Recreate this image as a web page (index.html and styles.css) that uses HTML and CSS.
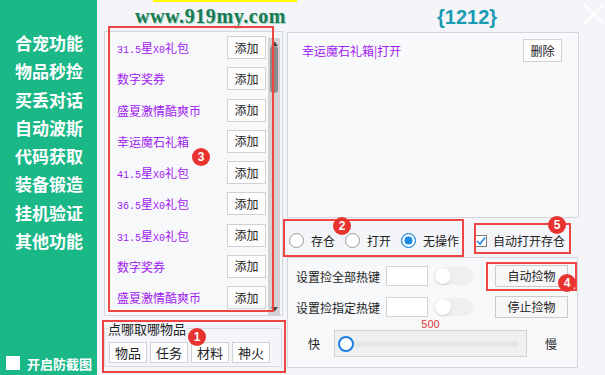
FILE: index.html
```html
<!DOCTYPE html>
<html lang="zh-CN">
<head>
    <meta charset="UTF-8">
    <title>物品秒捡</title>
    <link rel="stylesheet" href="styles.css">
</head>
<body>

<div class="app">
    <aside class="sidebar">
        <nav class="menu">
            <a>合宠功能</a>
            <a>物品秒捡</a>
            <a>买丢对话</a>
            <a>自动波斯</a>
            <a>代码获取</a>
            <a>装备锻造</a>
            <a>挂机验证</a>
            <a>其他功能</a>
        </nav>
        <label class="guard"><span class="box"></span>开启防截图</label>
    </aside>

    <main class="main">
        <div class="head-left">
            <div class="strip"></div>
            <div class="site">www.919my.com</div>
        </div>
        <div class="head-right"><span class="code">{1212}</span></div>
        <div class="head-close">
            <svg width="22" height="22" viewBox="0 0 22 22"><path d="M1 1 L21 21 M21 1 L1 21" stroke="#fff" stroke-width="2"/></svg>
        </div>

        <section class="left">
            <div class="list-panel">
                <ul class="items">
                    <li><span class="name"><span class="num">31.5</span>星<span class="num">X0</span>礼包</span><button class="btn">添加</button></li>
                    <li><span class="name">数字奖券</span><button class="btn">添加</button></li>
                    <li><span class="name">盛夏激情酷爽币</span><button class="btn">添加</button></li>
                    <li><span class="name">幸运魔石礼箱</span><button class="btn">添加</button></li>
                    <li><span class="name"><span class="num">41.5</span>星<span class="num">X0</span>礼包</span><button class="btn">添加</button></li>
                    <li><span class="name"><span class="num">36.5</span>星<span class="num">X0</span>礼包</span><button class="btn">添加</button></li>
                    <li><span class="name"><span class="num">31.5</span>星<span class="num">X0</span>礼包</span><button class="btn">添加</button></li>
                    <li><span class="name">数字奖券</span><button class="btn">添加</button></li>
                    <li><span class="name">盛夏激情酷爽币</span><button class="btn">添加</button></li>
                </ul>
                <div class="scrollbar">
                    <span class="arrow up"></span>
                    <span class="thumb"></span>
                    <span class="fill"></span>
                    <span class="arrow down"></span>
                </div>
            </div>
            <fieldset class="pick">
                <legend>点哪取哪物品</legend>
                <div class="pick-btns">
                    <button class="btn">物品</button>
                    <button class="btn">任务</button>
                    <button class="btn">材料</button>
                    <button class="btn">神火</button>
                </div>
            </fieldset>
        </section>

        <section class="right">
            <div class="detail">
                <div class="detail-row">
                    <span class="name">幸运魔石礼箱|打开</span>
                    <button class="btn">删除</button>
                </div>
            </div>

            <div class="options">
                <label class="radio"><span class="dot"></span>存仓</label>
                <label class="radio"><span class="dot"></span>打开</label>
                <label class="radio"><span class="dot on"></span>无操作</label>
                <label class="check">
                    <span class="tick"><svg width="10" height="10" viewBox="0 0 10 10"><path d="M1 5 L4 8 L9 1.5" fill="none" stroke="#1e88e5" stroke-width="1.6"/></svg></span>
                    自动打开存仓
                </label>
            </div>

            <div class="settings">
                <div class="set-row">
                    <span class="set-label">设置捡全部热键</span>
                    <span class="key-box"></span>
                    <span class="toggle"><span class="knob"></span></span>
                    <button class="btn wide">自动捡物</button>
                </div>
                <div class="set-row">
                    <span class="set-label">设置捡指定热键</span>
                    <span class="key-box"></span>
                    <span class="toggle"><span class="knob"></span></span>
                    <button class="btn wide">停止捡物</button>
                </div>
                <div class="speed">
                    <span class="speed-end">快</span>
                    <div class="speed-mid">
                        <div class="speed-val">500</div>
                        <div class="slider"><span class="handle"></span><span class="track"></span></div>
                    </div>
                    <span class="speed-end slow">慢</span>
                </div>
            </div>
        </section>
    </main>

    <!-- annotation marks -->
    <div class="mark mark-list"></div>
    <div class="mark mark-pick"></div>
    <div class="mark mark-radio"></div>
    <div class="mark mark-check"></div>
    <div class="mark mark-auto"></div>

    <span class="badge badge-1">1</span>
    <span class="badge badge-2">2</span>
    <span class="badge badge-3">3</span>
    <span class="badge badge-4">4</span>
    <span class="badge badge-5">5</span>
</div>

</body>
</html>
```

FILE: styles.css
```css
body {
    margin: 0;
    font-family: "Noto Sans CJK SC", "Noto Sans", sans-serif;
}

.app {
    position: relative;
    width: 605px;
    height: 375px;
    display: flex;
    background: #f3f5f8;
    overflow: hidden;
}

/* left green menu */
.sidebar {
    width: 97px;
    flex: none;
    background: #1ab787;
    display: flex;
    flex-direction: column;
    justify-content: space-between;
    padding: 29px 0 5px 0;
    box-sizing: border-box;
}

.menu a {
    display: block;
    padding-left: 15px;
    height: 28.3px;
    line-height: 28.3px;
    color: #fff;
    font-size: 17px;
    font-weight: 700;
}

.guard {
    display: flex;
    align-items: center;
    gap: 7px;
    padding-left: 6px;
    height: 14px;
    color: #fff;
    font-size: 13px;
    font-weight: 700;
}

.guard .box {
    width: 14px;
    height: 14px;
    background: #fff;
}

/* main area */
.main {
    flex: 1;
    display: grid;
    grid-template-columns: 179px 292px 1fr;
    grid-template-rows: 31px 1fr;
    column-gap: 4px;
    padding-left: 7px;
}

.strip {
    margin-left: 49px;
    width: 144px;
    height: 2px;
    background: #ffff00;
}

.site {
    margin-top: 2px;
    padding-left: 31px;
    white-space: nowrap;
    font-family: "Liberation Serif", serif;
    font-size: 20px;
    font-weight: 700;
    line-height: 24px;
    letter-spacing: 0.6px;
    color: #187a52;
    text-shadow: 1px 1px 0 #a8d8c2;
}

.head-right {
    padding: 5px 0 0 150px;
}

.code {
    font-family: "Liberation Sans", sans-serif;
    font-size: 20px;
    font-weight: 700;
    line-height: 24px;
    color: #1a9ab3;
}

.head-close {
    justify-self: end;
    margin-right: 5px;
    padding-top: 3px;
}

.btn {
    font-family: "Noto Sans CJK SC", sans-serif;
    font-size: 12px;
    color: #222;
    background: #fdfdfd;
    border: 1px solid #cfd1d4;
    padding: 0;
    line-height: 1;
}

.name {
    color: #a020f0;
    font-size: 12px;
    white-space: nowrap;
}

.num {
    font-family: "Liberation Mono", monospace;
    font-size: 10px;
}

/* item list */
.left {
    display: flex;
    flex-direction: column;
}

.list-panel {
    height: 285px;
    box-sizing: border-box;
    border: 1px solid #d3d6da;
    background: #f7f8fa;
    display: flex;
}

.items {
    list-style: none;
    margin: 0;
    padding: 0 2px 0 12px;
    flex: 1;
}

.items li {
    height: 31.25px;
    display: flex;
    align-items: center;
    justify-content: space-between;
}

.items .btn {
    width: 39px;
    height: 23px;
}

.scrollbar {
    width: 12px;
    margin: 6px 2px 0 0;
    background: #d3d3d3;
    display: flex;
    flex-direction: column;
    align-items: center;
}

.arrow {
    height: 8px;
    width: 7px;
    box-sizing: border-box;
    border-left: 3.5px solid transparent;
    border-right: 3.5px solid transparent;
}

.arrow.up {
    border-bottom: 4px solid #444;
    border-top: 2px solid transparent;
}

.arrow.down {
    border-top: 4px solid #444;
    border-bottom: 3px solid transparent;
}

.thumb {
    width: 8px;
    height: 47px;
    border-radius: 4px;
    background: #8b8b8b;
}

.fill {
    flex: 1;
}

.pick {
    margin: 4px 1px 0 0;
    padding: 5px 4px 3px 4px;
    border: 1px solid #d8dadd;
    min-width: 0;
}

.pick legend {
    padding: 0;
    margin-left: -1px;
    font-size: 13px;
    line-height: 17px;
    color: #222;
}

.pick-btns {
    display: flex;
    gap: 3px;
}

.pick-btns .btn {
    width: 38px;
    height: 21px;
    font-size: 13px;
}

/* right side */
.right {
    display: flex;
    flex-direction: column;
}

.detail {
    height: 186px;
    margin-top: 1px;
    box-sizing: border-box;
    border: 1px solid #d3d6da;
    background: #f8f9fb;
    padding: 6px 16px 0 14px;
}

.detail-row {
    display: flex;
    align-items: center;
    justify-content: space-between;
}

.detail-row .btn {
    width: 39px;
    height: 23px;
}

.options {
    height: 39px;
    box-sizing: border-box;
    padding: 6px 0 0 2px;
    display: flex;
    align-items: center;
    font-size: 12px;
    color: #222;
}

.radio {
    display: inline-flex;
    align-items: center;
    gap: 7px;
    margin-right: 10px;
}

.dot {
    width: 15px;
    height: 15px;
    box-sizing: border-box;
    border: 1px solid #9a9a9a;
    border-radius: 50%;
    background: #fff;
}

.dot.on {
    border: 1.5px solid #1e88e5;
    background: #1e88e5;
    box-shadow: inset 0 0 0 2.5px #fff;
}

.check {
    display: inline-flex;
    align-items: center;
    gap: 6px;
    margin-left: 6px;
}

.tick {
    width: 12px;
    height: 12px;
    box-sizing: border-box;
    border: 1px solid #7d7d7d;
    background: #fff;
    display: flex;
    align-items: center;
    justify-content: center;
}

.settings {
    width: 291px;
    height: 111px;
    box-sizing: border-box;
    border: 1px solid #d3d6da;
    background: #f6f8fa;
    padding: 7px 0 0 8px;
}

.set-row {
    display: flex;
    align-items: center;
    height: 22px;
}

.set-row + .set-row {
    margin-top: 9px;
}

.set-label {
    width: 90px;
    font-size: 12px;
    color: #222;
}

.key-box {
    width: 42px;
    height: 20px;
    box-sizing: border-box;
    border: 1px solid #d2d4d7;
    background: #fff;
}

.toggle {
    margin-left: 6px;
    width: 39px;
    height: 18px;
    border-radius: 9px;
    background: #eeeff0;
    display: flex;
    align-items: center;
    padding-left: 1px;
    box-sizing: border-box;
}

.knob {
    width: 16px;
    height: 16px;
    border-radius: 50%;
    background: #fff;
    box-shadow: 0 1px 2px rgba(0, 0, 0, 0.15);
}

.btn.wide {
    margin-left: 22px;
    width: 73px;
    height: 22px;
    background: #f7f7f7;
    border-color: #c9cbce;
}

.speed {
    display: flex;
    align-items: flex-end;
    margin-top: 1px;
}

.speed-end {
    margin-left: 12px;
    height: 27px;
    line-height: 27px;
    font-size: 12px;
    color: #222;
}

.speed-end.slow {
    margin-left: 18px;
}

.speed-mid {
    margin-left: 14px;
    width: 193px;
}

.speed-val {
    text-align: center;
    font-family: "Liberation Sans", sans-serif;
    font-size: 11px;
    line-height: 11px;
    color: #e53935;
}

.slider {
    height: 27px;
    box-sizing: border-box;
    border: 1px solid #cfd1d4;
    background: #eff0f2;
    display: flex;
    align-items: center;
    padding: 0 8px 0 3px;
}

.handle {
    width: 12px;
    height: 12px;
    border: 2px solid #1f7fe0;
    border-radius: 50%;
    background: #fff;
}

.track {
    flex: 1;
    height: 6px;
    background: #e5e6e8;
}

/* red annotation marks */
.mark {
    position: absolute;
    box-sizing: border-box;
    border: 2px solid #ef4444;
}

.mark-list { left: 108px; top: 26px; width: 166px; height: 286px; }
.mark-pick { left: 102px; top: 320px; width: 184px; height: 53px; }
.mark-radio { left: 283px; top: 219px; width: 181px; height: 38px; }
.mark-check { left: 474px; top: 223px; width: 97px; height: 31px; }
.mark-auto { left: 486px; top: 262px; width: 91px; height: 29px; }

.badge {
    position: absolute;
    width: 18px;
    height: 18px;
    border-radius: 50%;
    background: #e8332e;
    color: #fff;
    font-family: "Liberation Sans", sans-serif;
    font-size: 12px;
    font-weight: 700;
    line-height: 18px;
    text-align: center;
}

.badge-1 { left: 188px; top: 328px; }
.badge-2 { left: 333px; top: 217px; }
.badge-3 { left: 192px; top: 148px; }
.badge-4 { left: 558px; top: 274px; }
.badge-5 { left: 548px; top: 216px; }
```
